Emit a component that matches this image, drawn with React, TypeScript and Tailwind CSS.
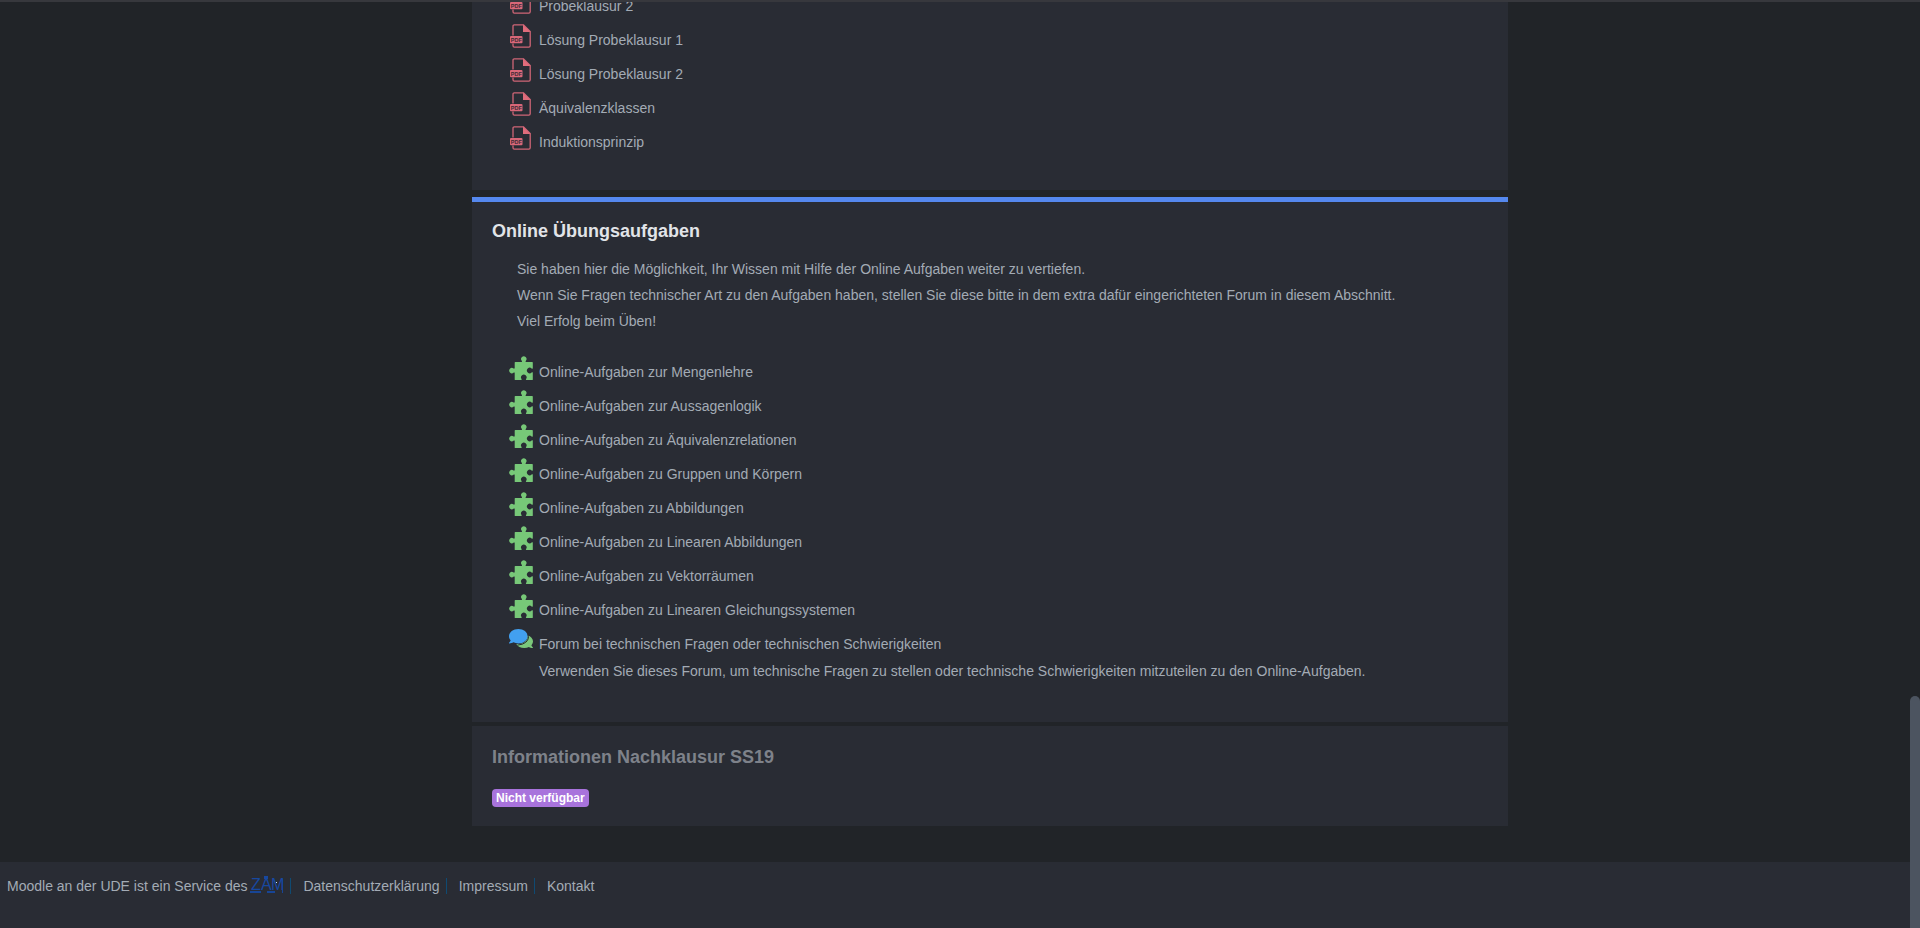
import React from "react";

const solutionFiles = [
  "Probeklausur 2",
  "Lösung Probeklausur 1",
  "Lösung Probeklausur 2",
  "Äquivalenzklassen",
  "Induktionsprinzip",
];

const exercises = [
  "Online-Aufgaben zur Mengenlehre",
  "Online-Aufgaben zur Aussagenlogik",
  "Online-Aufgaben zu Äquivalenzrelationen",
  "Online-Aufgaben zu Gruppen und Körpern",
  "Online-Aufgaben zu Abbildungen",
  "Online-Aufgaben zu Linearen Abbildungen",
  "Online-Aufgaben zu Vektorräumen",
  "Online-Aufgaben zu Linearen Gleichungssystemen",
];

const footerLinks = ["Datenschutzerklärung", "Impressum", "Kontakt"];

function PdfIcon() {
  return (
    <svg viewBox="0 0 24 24" className="size-6 shrink-0" aria-hidden="true">
      <path
        d="M4 11.5V2.2Q4 .9 5.3.9H14.5L21.2 7.6V21.8Q21.2 23.1 19.9 23.1H5.3Q4 23.1 4 21.8V19.5"
        fill="none"
        stroke="#cf6576"
        strokeWidth="1.3"
      />
      <path d="M14 .5 21.6 8H14Z" fill="#e06c7b" />
      <rect x="1" y="12" width="12.5" height="7.3" rx="1" fill="#d86778" />
      <text
        x="7.3"
        y="17.7"
        textAnchor="middle"
        fontFamily="Liberation Sans, sans-serif"
        fontWeight="700"
        fontSize="5.5"
        fill="#3c2b33"
      >
        PDF
      </text>
    </svg>
  );
}

function PuzzleIcon() {
  return (
    <svg viewBox="0 0 24 24" className="size-6 shrink-0" aria-hidden="true">
      <path
        d="M6.3 6H12.7C13.2 6 13.1 5.2 12.7 4.7A2.7 2.7 0 1 1 16.9 4.7C16.5 5.2 16.4 6 16.9 6H23.2Q23.8 6 23.8 6.6V12.3C23.8 12.9 23.1 12.8 22.6 12.4A2.8 2.8 0 1 0 22.6 16.6C23.1 16.2 23.8 16.1 23.8 16.7V23.4Q23.8 24 23.2 24H17.3C16.7 24 16.8 23.3 17.2 22.8A2.8 2.8 0 1 0 12.4 22.8C12.8 23.3 12.9 24 12.3 24H6.3Q5.7 24 5.7 23.4V17C5.7 16.5 5 16.5 4.5 16.8A2.7 2.7 0 1 1 4.5 12.4C5 12.7 5.7 12.7 5.7 12.2V6.6Q5.7 6 6.3 6Z"
        fill="#77c878"
      />
    </svg>
  );
}

function ForumIcon() {
  return (
    <svg viewBox="0 0 576 576" className="size-6 shrink-0" aria-hidden="true">
      <path
        d="M416 192c0-88.4-93.1-160-208-160S0 103.6 0 192c0 34.3 14.1 65.9 38 92-13.4 30.2-35.5 54.2-35.8 54.5-2.2 2.3-2.8 5.7-1.5 8.7S4.8 352 8 352c36.6 0 66.9-12.3 88.7-25 32.2 15.7 70.3 25 111.3 25 114.9 0 208-71.6 208-160z"
        transform="translate(0 -10) scale(1.08)"
        fill="#42a0f0"
      />
      <path
        d="M538 412c23.9-26 38-57.7 38-92 0-66.9-53.5-124.2-129.3-148.1 20 110-70 212.1-238.7 212.1-10.8 0-21.3-.8-31.7-1.9C207.8 439.6 281.8 480 368 480c41 0 79.1-9.2 111.3-25 21.8 12.7 52.1 25 88.7 25 3.2 0 6.1-1.9 7.3-4.8 1.3-2.9.7-6.3-1.5-8.7-.3-.3-22.4-24.2-35.8-54.5z"
        fill="#7bc87b"
      />
      <path
        d="M452 150Q500 260 400 345 340 398 200 412"
        fill="none"
        stroke="#282b33"
        strokeWidth="24"
      />
    </svg>
  );
}

function ZamLogo() {
  return (
    <svg viewBox="0 0 34 20" className="h-5 w-[34px]" role="img" aria-label="ZAM">
      <g fontFamily="Liberation Sans, sans-serif" fontSize="16" fill="#1748a0">
        <text x="1" y="14">Z</text>
        <text x="11" y="14">A</text>
        <text x="21" y="14">M</text>
      </g>
      <rect x="14" y="0" width="4" height="3" fill="#1748a0" />
      <rect x="0" y="15" width="11" height="2" fill="#174596" />
      <rect x="17" y="15" width="8" height="2" fill="#174596" />
      <rect x="32" y="3" width="1" height="14" fill="#174596" />
      <rect x="26" y="6" width="1" height="1" fill="#d6e2f5" />
    </svg>
  );
}

function Activity({ icon, label }: { icon: React.ReactNode; label: string }) {
  return (
    <li className="flex h-[34px] items-start pt-px">
      <a href="#" className="flex gap-1.5">
        {icon}
        <span className="leading-8">{label}</span>
      </a>
    </li>
  );
}

export default function App() {
  return (
    <div className="flex min-h-screen flex-col bg-[#212428] font-['Liberation_Sans',Arial,sans-serif] text-sm text-[#a3abb5]">
      <div className="h-0.5 bg-[#37383d]" />

      <main className="pb-9 pl-[60px]">
        <div className="mx-auto max-w-[1036px]">
          <section className="overflow-hidden bg-[#292c34] pb-[31px] pl-[37px]">
            <ul className="-mt-[13px]">
              {solutionFiles.map((name) => (
                <Activity key={name} icon={<PdfIcon />} label={name} />
              ))}
            </ul>
          </section>

          <section className="mt-[7px] border-t-[5px] border-[#5588ee] bg-[#292c34] px-5 pt-[17px] pb-[38px]">
            <h2 className="text-lg leading-6 font-bold text-[#e1e4e8]">Online Übungsaufgaben</h2>
            <div className="mt-[13px] pl-[25px] leading-[26px]">
              <p>Sie haben hier die Möglichkeit, Ihr Wissen mit Hilfe der Online Aufgaben weiter zu vertiefen.</p>
              <p>
                Wenn Sie Fragen technischer Art zu den Aufgaben haben, stellen Sie diese bitte in dem extra dafür
                eingerichteten Forum in diesem Abschnitt.
              </p>
              <p>Viel Erfolg beim Üben!</p>
            </div>
            <ul className="mt-[21px] pl-[17px]">
              {exercises.map((name) => (
                <Activity key={name} icon={<PuzzleIcon />} label={name} />
              ))}
              <Activity icon={<ForumIcon />} label="Forum bei technischen Fragen oder technischen Schwierigkeiten" />
            </ul>
            <p className="-mt-[3px] pl-[47px] leading-[26px]">
              Verwenden Sie dieses Forum, um technische Fragen zu stellen oder technische Schwierigkeiten mitzuteilen zu
              den Online-Aufgaben.
            </p>
          </section>

          <section className="mt-1 bg-[#292c34] px-5 pt-[19px] pb-[19px]">
            <h2 className="text-lg leading-6 font-bold text-[#7e828a]">Informationen Nachklausur SS19</h2>
            <div className="mt-5 flex">
              <span className="rounded-sm bg-[#a873dc] px-1 text-xs leading-[18px] font-bold text-white">
                Nicht verfügbar
              </span>
            </div>
          </section>
        </div>
      </main>

      <footer className="flex flex-1 items-start bg-[#292c34] px-[7px] pt-3.5 leading-5">
        <span>Moodle an der UDE ist ein Service des</span>
        <a href="#" className="ml-[3px]">
          <ZamLogo />
        </a>
        {footerLinks.map((name) => (
          <div key={name} className="flex items-center">
            <span className="mr-3 ml-1.5 h-4 w-px bg-[#0f4a72]" />
            <a href="#">{name}</a>
          </div>
        ))}
      </footer>

      <div className="fixed right-0 bottom-0 h-1/4 w-2.5 rounded-t-full bg-[#4c5460]" />
    </div>
  );
}
